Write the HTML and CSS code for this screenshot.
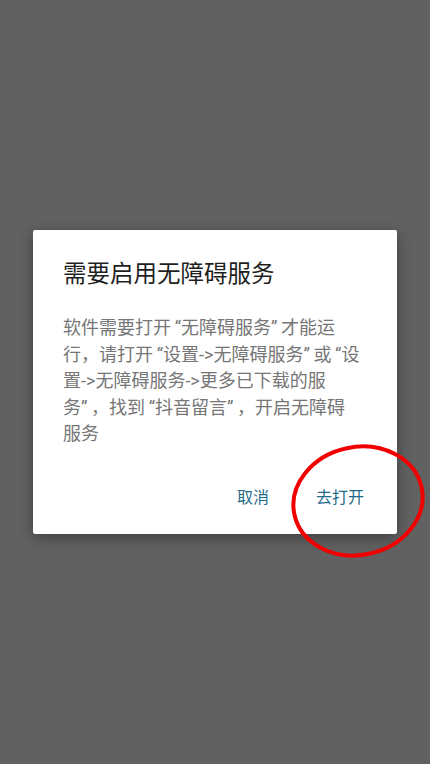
FILE: index.html
```html
<!DOCTYPE html>
<html lang="zh-CN">
<head>
  <meta charset="UTF-8" />
  <meta name="viewport" content="width=device-width, initial-scale=1.0" />
  <title>需要启用无障碍服务</title>
  <link rel="stylesheet" href="styles.css">
</head>
<body>
  <div class="scrim">
    <div class="dialog">
      <h2 class="dialog-title">需要启用无障碍服务</h2>
      <p class="dialog-msg">软件需要打开<q>无障碍服务</q>才能运<br>行，请打开<q>设置-&gt;无障碍服务</q>或<q>设<br>置-&gt;无障碍服务-&gt;更多已下载的服<br>务</q>，找到<q>抖音留言</q>，开启无障碍<br>服务</p>
      <div class="dialog-actions">
        <button class="btn">取消</button>
        <button class="btn">去打开</button>
      </div>
    </div>
  </div>

  <svg class="mark" width="430" height="764" viewBox="0 0 430 764">
    <ellipse cx="358" cy="501" rx="65" ry="54" transform="rotate(-12 358 501)"
             fill="none" stroke="#f20000" stroke-width="4" />
  </svg>
</body>
</html>
```

FILE: styles.css
```css
html, body {
  margin: 0;
  padding: 0;
  height: 100%;
}
body {
  font-family: Roboto, "Noto Sans CJK SC", sans-serif;
  background-color: #616161;
}
.scrim {
  height: 100%;
  display: flex;
  align-items: center;
  justify-content: center;
}
.dialog {
  width: 364px;
  box-sizing: border-box;
  padding: 28px 24px 20px 30px;
  background-color: #fff;
  border-radius: 2px;
  box-shadow: 0 4px 14px rgba(0, 0, 0, 0.35);
}
.dialog-title {
  margin: 0;
  font-size: 23.5px;
  line-height: 32px;
  font-weight: normal;
  color: #1f1f1f;
}
.dialog-msg {
  margin: 25px 0 0;
  font-size: 18px;
  line-height: 26.5px;
  color: #767676;
  white-space: nowrap;
}
.dialog-msg q {
  quotes: "\201C" "\201D";
}
.dialog-msg q::before,
.dialog-msg q::after {
  display: inline-block;
  width: 10px;
}
.dialog-msg q::before {
  text-align: right;
}
.dialog-msg q::after {
  text-align: left;
}
.dialog-actions {
  display: flex;
  justify-content: flex-end;
  gap: 47px;
  margin-top: 30px;
  padding-right: 9px;
}
.btn {
  height: 36px;
  padding: 0;
  border: none;
  background: none;
  font-family: inherit;
  font-size: 16px;
  color: #1f6b89;
  cursor: pointer;
}
.mark {
  position: absolute;
  left: 0;
  top: 0;
  pointer-events: none;
}
```
